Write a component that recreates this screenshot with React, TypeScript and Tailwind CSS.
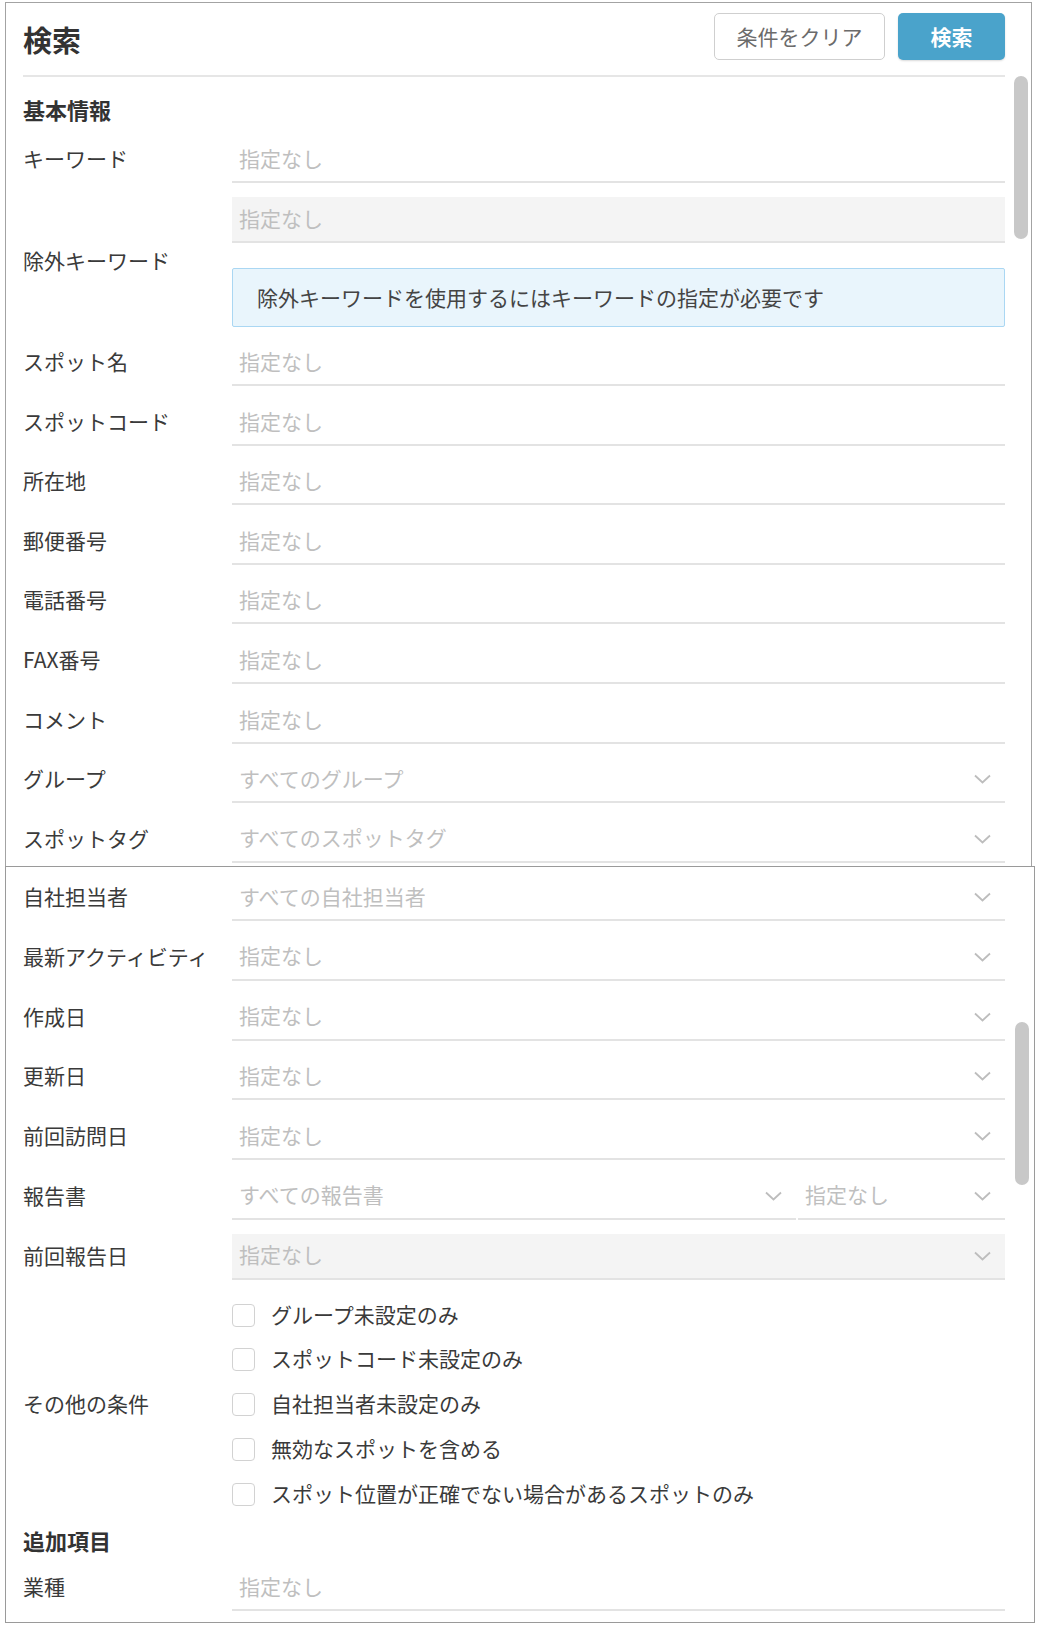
import React from "react";

const FONT = "font-['Noto_Sans_CJK_JP','Noto_Sans',sans-serif]";

function Chevron() {
  return (
    <svg width="17" height="10" viewBox="0 0 17 10" className="shrink-0">
      <polyline points="1,1.5 8.5,8.5 16,1.5" fill="none" stroke="#bdbdbd" strokeWidth="1.8" />
    </svg>
  );
}

function TextInput({ placeholder = "指定なし", disabled = false }: { placeholder?: string; disabled?: boolean }) {
  return (
    <div
      className={`h-[46px] flex items-center pl-[7px] pb-[2px] border-b-2 border-[#e3e3e3] text-[21px] leading-[28px] text-[#bfbfbf] ${
        disabled ? "bg-[#f4f4f4]" : "bg-white"
      }`}
    >
      {placeholder}
    </div>
  );
}

function SelectInput({ placeholder = "指定なし", disabled = false }: { placeholder?: string; disabled?: boolean }) {
  return (
    <div
      className={`h-[46px] flex items-center justify-between pl-[7px] pr-[14px] border-b-2 border-[#e3e3e3] text-[21px] leading-[28px] text-[#bfbfbf] ${
        disabled ? "bg-[#f4f4f4]" : "bg-white"
      }`}
    >
      <span className="pb-[3px]">{placeholder}</span>
      <Chevron />
    </div>
  );
}

function Row({ label, children, mb = "mb-[13.6px]" }: { label: string; children: React.ReactNode; mb?: string }) {
  return (
    <div className={`grid grid-cols-[209px_773px] items-center ${mb}`}>
      <div className="text-[21px] leading-[28px] pb-[4px] text-[#3a3a3a] whitespace-nowrap">{label}</div>
      <div>{children}</div>
    </div>
  );
}

function SectionHeader({ children }: { children: React.ReactNode }) {
  return <div className="text-[22px] leading-[30px] font-bold text-[#333]">{children}</div>;
}

function Checkbox({ label }: { label: string }) {
  return (
    <div className="h-[44.8px] flex items-center">
      <div className="w-[23px] h-[23px] rounded-[4px] border-[1.5px] border-[#d2d2d2] bg-white shrink-0" />
      <span className="ml-[16px] pb-[3px] text-[21px] leading-[28px] text-[#3a3a3a]">{label}</span>
    </div>
  );
}

export default function App() {
  return (
    <div className={`w-[1038px] h-[1626px] bg-white ${FONT} pt-[2px]`}>
      {/* Top panel */}
      <div className="relative ml-[5px] w-[1027px] h-[864px] border-t border-x border-[#a3a3a3] overflow-hidden bg-white">
        <div className="flex items-center justify-between pl-[17px] pr-[26px] pt-[10px] pb-[15px]">
          <div className="text-[29px] leading-[40px] font-bold text-[#333] mt-[4px]">検索</div>
          <div className="flex gap-[13px]">
            <button className="w-[171px] h-[47px] rounded-[5px] border border-[#cfcfcf] bg-white text-[21px] text-[#6b6b6b]">
              条件をクリア
            </button>
            <button className="w-[107px] h-[47px] rounded-[5px] bg-[#4aa3cb] text-[21px] font-bold text-white shadow-[0_1px_2px_rgba(0,0,0,0.15)]">
              検索
            </button>
          </div>
        </div>
        <div className="ml-[17px] mr-[26px] border-t-2 border-[#e6e6e6]" />
        <div className="pl-[17px] pr-[26px] pt-[17px]">
          <SectionHeader>基本情報</SectionHeader>
          <div className="h-[13px]" />
          <Row label="キーワード" mb="mb-[14px]">
            <TextInput />
          </Row>
          <Row label="除外キーワード" mb="mb-[13px]">
            <TextInput disabled />
            <div className="mt-[25px] h-[59px] flex items-center pl-[24px] pb-[2px] bg-[#e9f5fc] border border-[#aad7f3] rounded-[2px] text-[21px] leading-[28px] text-[#444]">
              除外キーワードを使用するにはキーワードの指定が必要です
            </div>
          </Row>
          <Row label="スポット名"><TextInput /></Row>
          <Row label="スポットコード"><TextInput /></Row>
          <Row label="所在地"><TextInput /></Row>
          <Row label="郵便番号"><TextInput /></Row>
          <Row label="電話番号"><TextInput /></Row>
          <Row label="FAX番号"><TextInput /></Row>
          <Row label="コメント"><TextInput /></Row>
          <Row label="グループ"><SelectInput placeholder="すべてのグループ" /></Row>
          <Row label="スポットタグ"><SelectInput placeholder="すべてのスポットタグ" /></Row>
        </div>
        <div className="absolute right-[3px] top-[73px] w-[14px] h-[163px] rounded-full bg-[#c8c8c8]" />
      </div>

      {/* Bottom panel */}
      <div className="relative ml-[5px] w-[1030px] h-[757px] border border-[#9a9a9a] overflow-hidden bg-white">
        <div className="pl-[17px] pr-[29px] pt-[8px]">
          <Row label="自社担当者" mb="mb-[13.8px]"><SelectInput placeholder="すべての自社担当者" /></Row>
          <Row label="最新アクティビティ" mb="mb-[13.8px]"><SelectInput /></Row>
          <Row label="作成日" mb="mb-[13.8px]"><SelectInput /></Row>
          <Row label="更新日" mb="mb-[13.8px]"><SelectInput /></Row>
          <Row label="前回訪問日" mb="mb-[13.8px]"><SelectInput /></Row>
          <Row label="報告書" mb="mb-[13.8px]">
            <div className="grid grid-cols-[564px_207px] gap-[2px]">
              <div className="h-[46px] flex items-center justify-between pl-[7px] pr-[14px] border-b-2 border-[#e3e3e3] text-[21px] leading-[28px] text-[#bfbfbf]">
                <span className="pb-[3px]">すべての報告書</span>
                <Chevron />
              </div>
              <SelectInput />
            </div>
          </Row>
          <Row label="前回報告日" mb="mb-[13px]"><SelectInput disabled /></Row>
          <Row label="その他の条件" mb="mb-[8px]">
            <div className="flex flex-col">
              <Checkbox label="グループ未設定のみ" />
              <Checkbox label="スポットコード未設定のみ" />
              <Checkbox label="自社担当者未設定のみ" />
              <Checkbox label="無効なスポットを含める" />
              <Checkbox label="スポット位置が正確でない場合があるスポットのみ" />
            </div>
          </Row>
          <SectionHeader>追加項目</SectionHeader>
          <div className="h-[10px]" />
          <Row label="業種"><TextInput /></Row>
        </div>
        <div className="absolute right-[5px] top-[155px] w-[14px] h-[163px] rounded-full bg-[#c8c8c8]" />
      </div>
    </div>
  );
}
